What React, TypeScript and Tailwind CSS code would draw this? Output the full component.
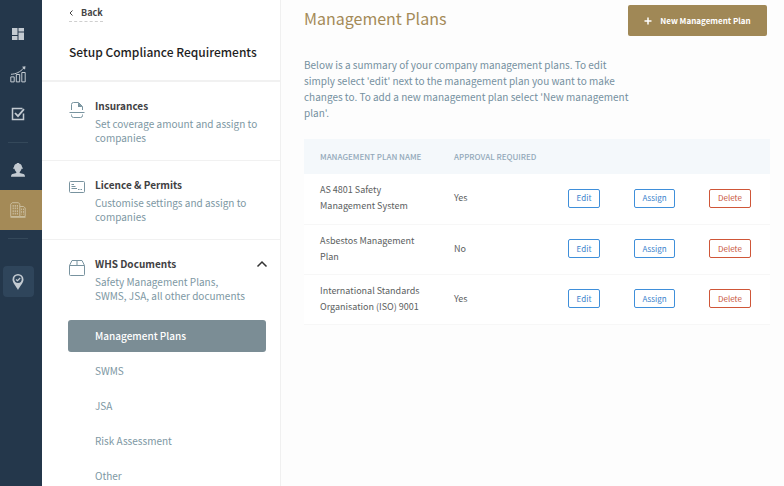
import type { ReactNode } from "react";

type Section = {
  title: string;
  description: ReactNode;
  icon: ReactNode;
  open?: boolean;
};

const plans = [
  { id: 1, name: "AS 4801 Safety Management System", approval: "Yes" },
  { id: 2, name: "Asbestos Management Plan", approval: "No" },
  { id: 3, name: "International Standards Organisation (ISO) 9001", approval: "Yes" },
];

const documents = ["Management Plans", "SWMS", "JSA", "Risk Assessment", "Other"];

function DashboardIcon() {
  return (
    <svg width="14" height="14" viewBox="0 0 14 14" fill="currentColor">
      <path d="M1 1h5.500v7H1zM7.500 1H13v3.500H7.500zM1 9h5.500v4H1zM7.500 5.500H13V13H7.500z" />
    </svg>
  );
}

function ChartIcon() {
  return (
    <svg width="16" height="17" viewBox="0 0 16 17" fill="none" stroke="currentColor">
      <path d="M.8 15.900v-5h3.400v5zM6.300 15.900V8.500h3.400v7.400zM11.800 15.900V6.500h3.400v9.400z" />
      <path d="M1 8.300C6 8 10 6.200 14 1.800" />
      <path d="M12 .8 15.500.3 15 3.800z" fill="currentColor" stroke="none" />
    </svg>
  );
}

function TickIcon() {
  return (
    <svg width="14" height="14" viewBox="0 0 14 14" fill="none" stroke="currentColor">
      <path d="M12.500 6.500v6h-11v-11h10" strokeWidth="1.500" />
      <path d="m4 6 3 3.200 6-7" strokeWidth="1.800" />
    </svg>
  );
}

function WorkerIcon() {
  return (
    <svg width="14" height="14" viewBox="0 0 14 14" fill="currentColor">
      <path d="M6 0h2v.5c1.900.4 3 1.800 3.100 4h.7v1.200h-1.300C10.300 7 9.600 8.200 8.700 8.900v1l3.800 1.200c.9.300 1.500 1.200 1.500 2.600H0c0-1.400.6-2.300 1.500-2.600l3.800-1.200v-1C4.400 8.200 3.700 7 3.500 5.700H2.200V4.500h.7C3 2.300 4.100.9 6 .5z" />
    </svg>
  );
}

function BuildingIcon() {
  return (
    <svg width="16" height="16" viewBox="0 0 16 16" fill="none" stroke="currentColor">
      <path d="M.7 14.500V2.200L2.200.700h6.300l1.300 1.500v12.300zM9.800 4.500h3.900l1.500 1.500v8.500H9.800M.5 15.300h15" />
      <path d="M3.200 3v9.500M5.300 3v9.500M7.400 3v9.500" strokeWidth="1.200" strokeDasharray="1.700 .9" />
      <path d="M11.600 6.500v6M13.500 6.500v6" strokeDasharray="1.700 .9" />
    </svg>
  );
}

function PinIcon() {
  return (
    <svg width="12" height="16" viewBox="0 0 12 16">
      <path
        d="M6 0a5.500 5.500 0 0 0-5.500 5.500C.5 9 4 12 6 16c2-4 5.500-7 5.500-10.500A5.500 5.500 0 0 0 6 0z"
        fill="currentColor"
      />
      <circle cx="6" cy="5.300" r="3.700" fill="#2f455b" />
      <path d="m4 5.500 1.500 1.200L8.200 4" fill="none" stroke="currentColor" strokeWidth="1.200" />
    </svg>
  );
}

function InsuranceIcon() {
  return (
    <svg width="16" height="16" viewBox="0 0 16 16" fill="none" stroke="currentColor">
      <path d="M2.500 8V2.500a2 2 0 0 1 2-2h5l4 4V8M.5 10.500h15M2.500 12.500v1a2 2 0 0 0 2 2h7a2 2 0 0 0 2-2v-1" />
      <path d="M9 .5 13.500 5H9z" fill="currentColor" stroke="none" />
    </svg>
  );
}

function LicenceIcon() {
  return (
    <svg width="16" height="12" viewBox="0 0 16 12" fill="none" stroke="currentColor">
      <rect x=".5" y=".5" width="15" height="11" rx="1" />
      <path d="M2.500 3.500H5M2.500 5.500h4M2.500 7.500H8M9 8.500h1.500M11.500 8.500H13" />
    </svg>
  );
}

function BoxIcon() {
  return (
    <svg width="16" height="16" viewBox="0 0 16 16" fill="none" stroke="currentColor">
      <path d="M.5 5.500v9a1 1 0 0 0 1 1h13a1 1 0 0 0 1-1v-9l-2.500-5H3zM.5 5.500h15M8 .5v5" />
    </svg>
  );
}

const sections: Section[] = [
  {
    title: "Insurances",
    description: "Set coverage amount and assign to companies",
    icon: <InsuranceIcon />,
  },
  {
    title: "Licence & Permits",
    description: "Customise settings and assign to companies",
    icon: <LicenceIcon />,
  },
  {
    title: "WHS Documents",
    description: (
      <>
        Safety Management Plans,
        <br />
        SWMS, JSA, all other documents
      </>
    ),
    icon: <BoxIcon />,
    open: true,
  },
];

function Rail() {
  const item = "flex h-10 w-full items-center justify-center";
  return (
    <nav aria-label="Main" className="flex w-[42px] shrink-0 flex-col items-center bg-[#24374b] pt-3.5 pr-1.5 text-[#c3cad1]">
      <a href="#dashboard" aria-label="Dashboard" className={item}>
        <DashboardIcon />
      </a>
      <a href="#reports" aria-label="Reports" className={item}>
        <ChartIcon />
      </a>
      <a href="#tasks" aria-label="Tasks" className={item}>
        <TickIcon />
      </a>
      <div className="mt-2 mb-[7px] h-px w-5 bg-[#34485a]" />
      <a href="#workers" aria-label="Workers" className={item}>
        <WorkerIcon />
      </a>
      <a
        href="#company"
        aria-label="Company"
        className="-mr-1.5 flex h-10 w-[42px] items-center justify-center bg-[#a48a57] pr-1.5 text-[#c9bc9d]"
      >
        <BuildingIcon />
      </a>
      <div className="mt-2 mb-[27px] h-px w-5 bg-[#34485a]" />
      <a
        href="#sites"
        aria-label="Sites"
        className="flex h-[31px] w-[31px] items-center justify-center rounded-sm bg-[#2f455b]"
      >
        <PinIcon />
      </a>
    </nav>
  );
}

function SetupPanel() {
  return (
    <aside className="w-[239px] shrink-0 overflow-hidden border-r border-[#f0f0f0] bg-white">
      <header className="h-[82px] border-b-2 border-[#f1f1f1] pt-[5px] pl-[27px]">
        <a
          href="#back"
          className="flex h-[17px] w-fit items-center gap-2 border-b border-dashed border-[#cfcfcf] text-[9px] leading-4 font-bold text-[#444]"
        >
          <svg width="4" height="6" viewBox="0 0 4 6" fill="none" stroke="currentColor">
            <path d="M3.500.5 1 3l2.500 2.500" />
          </svg>
          Back
        </a>
        <h2 className="mt-5 text-[12px] leading-5 font-medium whitespace-nowrap text-[#1e1e1e]">
          Setup Compliance Requirements
        </h2>
      </header>

      {sections.map((s) => (
        <section key={s.title} className={s.open ? "pt-4" : "h-[79px] border-b border-[#f1f1f1] pt-4"}>
          <div className="flex pr-3 pl-[27px]">
            <div className="w-[26px] shrink-0 pt-1 text-[#78939f]">{s.icon}</div>
            <div className="flex-1">
              <h3 className="text-[10px] leading-4 font-bold text-[#3f4143]">{s.title}</h3>
              <p className="mt-[3px] text-[10px] leading-[14px] text-[#7d97a3]">{s.description}</p>
            </div>
            {s.open && (
              <button type="button" aria-label="Collapse" className="flex h-4 w-3 shrink-0 items-center">
                <svg width="12" height="8" viewBox="0 0 12 8" fill="none" stroke="#333" strokeWidth="1.500">
                  <path d="m1.500 6.500 4.500-4.500 4.500 4.500" />
                </svg>
              </button>
            )}
          </div>
        </section>
      ))}

      <ul className="mt-[17px] mr-3.5 ml-[26px] flex flex-col gap-[3px] text-[10px]">
        {documents.map((d, i) => (
          <li key={d}>
            <a
              href="#documents"
              className={
                i === 0
                  ? "flex h-8 items-center rounded-[3px] bg-[#7b8d95] pb-0.5 pl-[27px] font-medium text-white"
                  : "flex h-8 items-center pb-0.5 pl-[27px] text-[#7d97a3]"
              }
            >
              {d}
            </a>
          </li>
        ))}
      </ul>
    </aside>
  );
}

function PlansTable() {
  const action = "h-[19px] rounded-[2px] border bg-white text-[8px] leading-4";
  return (
    <table className="mt-[18px] w-full table-fixed border-collapse text-left">
      <colgroup>
        <col className="w-[134px]" />
        <col className="w-[115px]" />
        <col className="w-[65px]" />
        <col className="w-[76px]" />
        <col />
      </colgroup>
      <thead>
        <tr className="h-[35px] bg-[#f4f8fb] text-[8px] whitespace-nowrap text-[#93a9ba]">
          <th className="pl-4 font-medium">MANAGEMENT PLAN NAME</th>
          <th className="pl-4 font-medium">APPROVAL REQUIRED</th>
          <td colSpan={3} />
        </tr>
      </thead>
      <tbody>
        {plans.map((p) => (
          <tr key={p.id} className="h-[50px] border-b border-[#f7f7f7] bg-white text-[9px] leading-4 text-[#5b5e60]">
            <td className="pr-3 pb-px pl-4">{p.name}</td>
            <td className="pb-px pl-4">{p.approval}</td>
            <td className="pb-px pl-[15px]">
              <button type="button" className={`${action} w-8 border-[#3f8fda] text-[#3a82cc]`}>
                Edit
              </button>
            </td>
            <td className="pb-px pl-4">
              <button type="button" className={`${action} w-[41px] border-[#3f8fda] text-[#3a82cc]`}>
                Assign
              </button>
            </td>
            <td className="pb-px pl-[15px]">
              <button type="button" className={`${action} w-[42px] border-[#cf5638] text-[#c75238]`}>
                Delete
              </button>
            </td>
          </tr>
        ))}
      </tbody>
    </table>
  );
}

export default function App() {
  return (
    <div className="flex h-screen overflow-hidden bg-[#fdfdfd] font-['Noto_Sans_CJK_SC','Noto_Sans',sans-serif]">
      <Rail />
      <SetupPanel />
      <main className="min-w-0 flex-1 pt-[5px] pr-3.5 pl-[23px]">
        <div className="flex items-start justify-between pr-[3px]">
          <h1 className="text-[16px] leading-[26px] text-[#a48a57]">Management Plans</h1>
          <button
            type="button"
            className="flex h-[31px] w-[139px] items-center justify-center gap-2 rounded-[2px] bg-[#a08856] text-[8px] font-bold text-white"
          >
            <svg width="8" height="8" viewBox="0 0 8 8" stroke="currentColor" strokeWidth="1.500">
              <path d="M4 .5v7M.5 4h7" />
            </svg>
            New Management Plan
          </button>
        </div>
        <p className="mt-[21px] max-w-[328px] text-[10px] leading-4 text-[#7590a0]">
          Below is a summary of your company management plans. To edit simply select 'edit' next to the
          management plan you want to make changes to. To add a new management plan select 'New management plan'.
        </p>
        <PlansTable />
      </main>
    </div>
  );
}
